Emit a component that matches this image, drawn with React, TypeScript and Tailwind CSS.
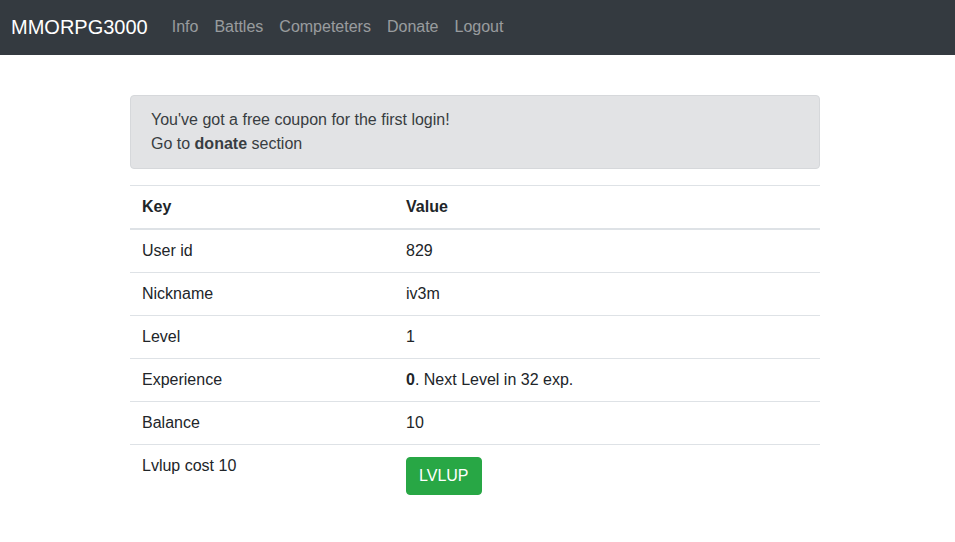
const rows: { key: string; value: React.ReactNode }[] = [
  { key: "User id", value: "829" },
  { key: "Nickname", value: "iv3m" },
  { key: "Level", value: "1" },
  {
    key: "Experience",
    value: (
      <>
        <b className="font-bold">0</b>. Next Level in 32 exp.
      </>
    ),
  },
  { key: "Balance", value: "10" },
];

const links = ["Info", "Battles", "Competeters", "Donate", "Logout"];

export default function App() {
  return (
    <div className="min-h-[542px] bg-white text-[16px] leading-6 text-[#212529] [font-family:'Liberation_Sans',Arial,sans-serif]">
      <nav className="flex h-[55px] items-center bg-[#343a40] px-[11px] pb-[2px]">
        <span className="mr-4 text-[20px] leading-[30px] text-white">MMORPG3000</span>
        <div className="flex">
          {links.map((l) => (
            <span key={l} className="px-2 text-[16px] leading-6 text-white/50">
              {l}
            </span>
          ))}
        </div>
      </nav>

      <main className="mt-10 pl-[130px]">
        <div className="w-[690px]">
          <div className="mb-4 rounded border border-[#d6d8db] bg-[#e2e3e5] px-5 py-3 text-[#383d41]">
            <p>You've got a free coupon for the first login!</p>
            <p>
              Go to <b className="font-bold">donate</b> section
            </p>
          </div>

          <div className="border-t border-[#dee2e6]">
            <div className="grid grid-cols-[264px_1fr] border-b-2 border-[#dee2e6] font-bold">
              <div className="px-3 py-[9px]">Key</div>
              <div className="px-3 py-[9px]">Value</div>
            </div>
            {rows.map((r, i) => (
              <div
                key={r.key}
                className={
                  i === 0
                    ? "grid grid-cols-[264px_1fr]"
                    : "grid grid-cols-[264px_1fr] border-t border-[#dee2e6]"
                }
              >
                <div className="px-3 py-[9px]">{r.key}</div>
                <div className="px-3 py-[9px]">{r.value}</div>
              </div>
            ))}
            <div className="grid grid-cols-[264px_1fr] border-t border-[#dee2e6]">
              <div className="px-3 py-[9px]">Lvlup cost 10</div>
              <div className="px-3 pt-3 pb-[9px]">
                <button className="rounded border border-[#28a745] bg-[#28a745] px-3 py-[6px] leading-6 text-white">
                  LVLUP
                </button>
              </div>
            </div>
          </div>
        </div>
      </main>
    </div>
  );
}
